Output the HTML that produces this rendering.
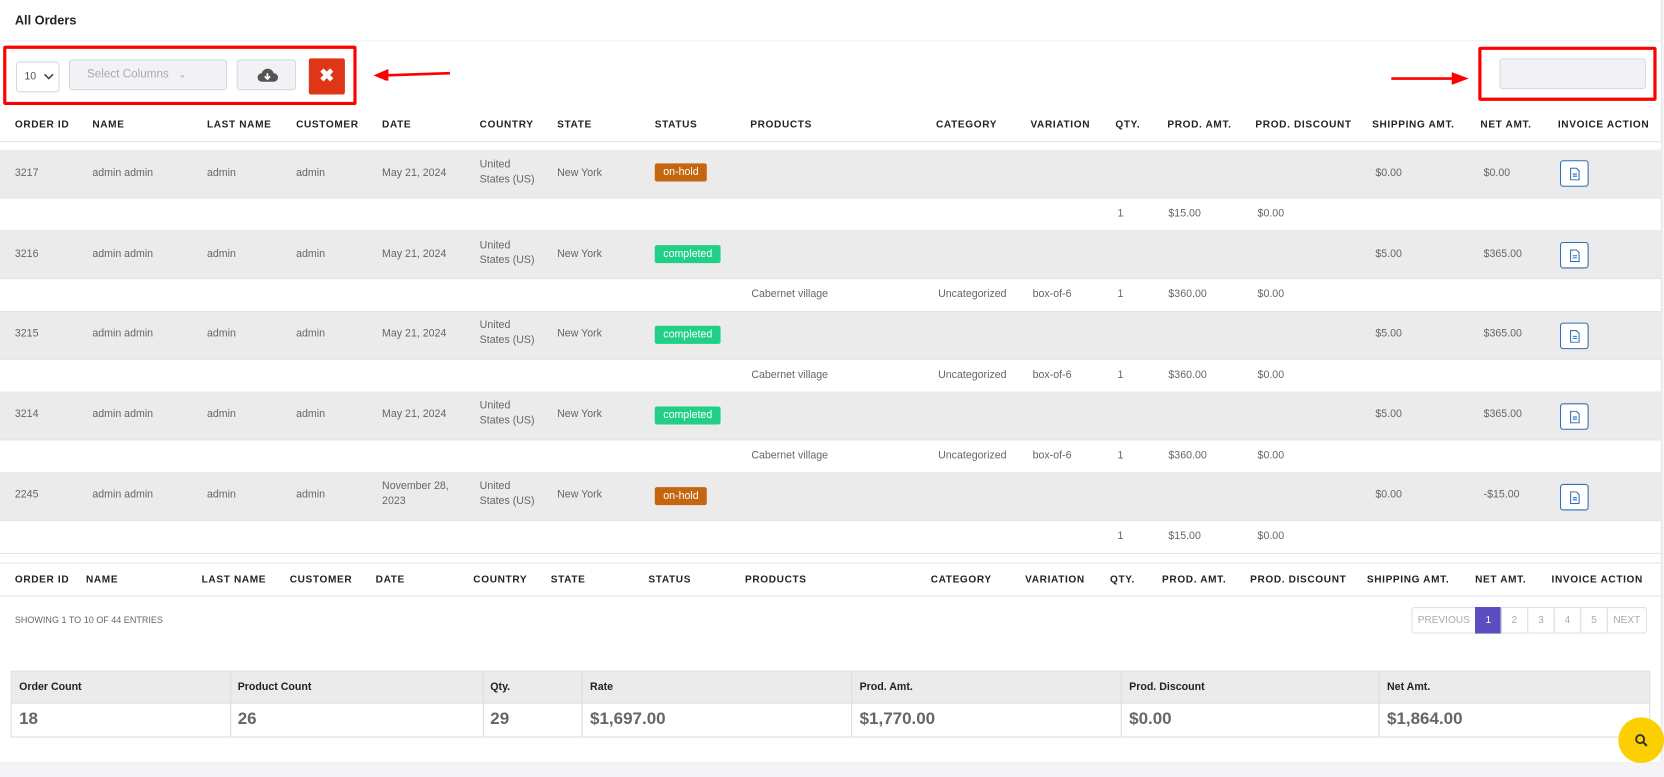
<!DOCTYPE html>
<html><head><meta charset="utf-8"><style>
*{margin:0;padding:0;box-sizing:border-box}
body{width:1664px;height:777px;background:#f3f3f8;font-family:"Liberation Sans",sans-serif;position:relative;overflow:hidden}
#w{position:absolute;left:0;top:0;width:1568px;height:732px;transform:scale(1.06122);transform-origin:0 0}
.card{position:absolute;left:0;top:0;width:1566px;height:718px;background:#fff;border-right:1px solid #e5e5ea}
.a{position:absolute;white-space:nowrap}
.h{font-size:9.5px;font-weight:bold;color:#222;letter-spacing:.6px;line-height:12px}
.c{font-size:10px;color:#666;line-height:12px}
.row{position:absolute;left:0;width:1566px;border-bottom:1px solid #e3e3e8}
.g{background:#ebebeb}
.badge{position:absolute;left:617px;top:13px;height:17px;border-radius:2px;color:#fff;font-size:10px;line-height:17px;padding:0 8px}
.oh{background:#c5650f}.cp{background:#21cf86}
.inv{position:absolute;left:1470px;top:10px;width:27px;height:25px;border:1px solid #2f6fb3;border-radius:3px;background:#fff}
.pg{position:absolute;top:572px;height:25px;border:1px solid #e0e0e6;font-size:9.5px;color:#aaa;line-height:23px;text-align:center}
.sh{font-size:10px;font-weight:bold;color:#222}
.sv{font-size:16px;font-weight:bold;color:#666}
</style></head><body>
<div id="w">
<div class="card">
<div class="a" style="left:14px;top:12px;font-size:12px;font-weight:bold;color:#222">All Orders</div>
<div class="a" style="left:0;top:38px;width:1566px;height:1px;background:#eee"></div>

<div class="a" style="left:3px;top:43px;width:333px;height:56px;border:3px solid #f00;border-radius:2px"></div>
<div class="a" style="left:15px;top:58px;width:41px;height:29px;border:1px solid #d8d8de;border-radius:3px;font-size:10px;color:#555;line-height:27px;padding-left:7px">10
<svg class="a" style="left:25px;top:10px" width="10" height="7" viewBox="0 0 10 7"><path d="M1 1l4 4 4-4" fill="none" stroke="#444" stroke-width="1.5"/></svg></div>
<div class="a" style="left:65px;top:56px;width:149px;height:29px;border:1px solid #d8d8de;border-radius:3px;background:#f2f2f6;font-size:11px;color:#aaa;line-height:27px;padding-left:16px">Select Columns <span style="font-size:9px;margin-left:6px">&#8964;</span></div>
<div class="a" style="left:223px;top:56px;width:56px;height:29px;border:1px solid #d8d8de;border-radius:3px;background:#f2f2f6">
<svg class="a" style="left:18px;top:6px" width="20" height="16" viewBox="0 0 20 16"><path d="M5 14a4 4 0 0 1-.5-8A6 6 0 0 1 16 6a4 4 0 0 1 0 8z" fill="#555"/><path d="M10 6v5M7.5 9l2.5 2.5L12.5 9" stroke="#fff" stroke-width="1.6" fill="none"/></svg></div>
<div class="a" style="left:291px;top:55px;width:34px;height:34px;background:#de3617;border-radius:2px;color:#fff;font-size:17px;font-weight:bold;text-align:center;line-height:34px">&#10006;</div>
<svg class="a" style="left:350px;top:64px" width="76" height="12" viewBox="0 0 76 12"><path d="M74 5L14 7" stroke="#f00" stroke-width="2.5"/><path d="M2 7l14-6v12z" fill="#f00"/></svg>
<svg class="a" style="left:1310px;top:68px" width="76" height="12" viewBox="0 0 76 12"><path d="M1 6h60" stroke="#f00" stroke-width="2.5"/><path d="M74 6L58 0v12z" fill="#f00"/></svg>
<div class="a" style="left:1393px;top:44px;width:168px;height:51px;border:3px solid #f00;border-radius:2px"></div>
<div class="a" style="left:1413px;top:55px;width:138px;height:29px;border:1px solid #d8d8de;border-radius:3px;background:#f2f2f6"></div>

<div class="a" style="left:0;top:133px;width:1566px;height:1px;background:#e3e3e8"></div>
<div class="h">
<div class="a" style="left:14px;top:112px">ORDER ID</div><div class="a" style="left:87px;top:112px">NAME</div><div class="a" style="left:195px;top:112px">LAST NAME</div><div class="a" style="left:279px;top:112px">CUSTOMER</div><div class="a" style="left:360px;top:112px">DATE</div><div class="a" style="left:452px;top:112px">COUNTRY</div><div class="a" style="left:525px;top:112px">STATE</div><div class="a" style="left:617px;top:112px">STATUS</div><div class="a" style="left:707px;top:112px">PRODUCTS</div><div class="a" style="left:882px;top:112px">CATEGORY</div><div class="a" style="left:971px;top:112px">VARIATION</div><div class="a" style="left:1051px;top:112px">QTY.</div><div class="a" style="left:1100px;top:112px">PROD. AMT.</div><div class="a" style="left:1183px;top:112px">PROD. DISCOUNT</div><div class="a" style="left:1293px;top:112px">SHIPPING AMT.</div><div class="a" style="left:1395px;top:112px">NET AMT.</div><div class="a" style="left:1468px;top:112px">INVOICE ACTION</div>
</div>

<div class="row g c" style="top:141px;height:46px"><div class="a" style="left:14px;top:17px">3217</div><div class="a" style="left:87px;top:17px">admin admin</div><div class="a" style="left:195px;top:17px">admin</div><div class="a" style="left:279px;top:17px">admin</div><div class="a" style="left:360px;top:17px">May 21, 2024</div><div class="a" style="left:452px;top:9px">United<br><span style="line-height:16px">States (US)</span></div><div class="a" style="left:525px;top:17px">New York</div><div class="badge oh">on-hold</div><div class="a" style="left:1296px;top:17px">$0.00</div><div class="a" style="left:1398px;top:17px">$0.00</div><div class="inv"><svg class="a" style="left:8px;top:6px" width="10" height="12" viewBox="0 0 10 12"><path d="M1 .5h5.5L9 3v8.5H1z" fill="none" stroke="#2f6fb3"/><path d="M3 6h4M3 8h4" stroke="#2f6fb3"/></svg></div></div>
<div class="row c" style="top:187px;height:31px"><div class="a" style="left:1053px;top:9px">1</div><div class="a" style="left:1101px;top:9px">$15.00</div><div class="a" style="left:1185px;top:9px">$0.00</div></div>

<div class="row g c" style="top:218px;height:45px"><div class="a" style="left:14px;top:16px">3216</div><div class="a" style="left:87px;top:16px">admin admin</div><div class="a" style="left:195px;top:16px">admin</div><div class="a" style="left:279px;top:16px">admin</div><div class="a" style="left:360px;top:16px">May 21, 2024</div><div class="a" style="left:452px;top:8px">United<br><span style="line-height:16px">States (US)</span></div><div class="a" style="left:525px;top:16px">New York</div><div class="badge cp">completed</div><div class="a" style="left:1296px;top:16px">$5.00</div><div class="a" style="left:1398px;top:16px">$365.00</div><div class="inv"><svg class="a" style="left:8px;top:6px" width="10" height="12" viewBox="0 0 10 12"><path d="M1 .5h5.5L9 3v8.5H1z" fill="none" stroke="#2f6fb3"/><path d="M3 6h4M3 8h4" stroke="#2f6fb3"/></svg></div></div>
<div class="row c" style="top:263px;height:31px"><div class="a" style="left:708px;top:9px">Cabernet village</div><div class="a" style="left:884px;top:9px">Uncategorized</div><div class="a" style="left:973px;top:9px">box-of-6</div><div class="a" style="left:1053px;top:9px">1</div><div class="a" style="left:1101px;top:9px">$360.00</div><div class="a" style="left:1185px;top:9px">$0.00</div></div>

<div class="row g c" style="top:294px;height:45px"><div class="a" style="left:14px;top:15px">3215</div><div class="a" style="left:87px;top:15px">admin admin</div><div class="a" style="left:195px;top:15px">admin</div><div class="a" style="left:279px;top:15px">admin</div><div class="a" style="left:360px;top:15px">May 21, 2024</div><div class="a" style="left:452px;top:7px">United<br><span style="line-height:16px">States (US)</span></div><div class="a" style="left:525px;top:15px">New York</div><div class="badge cp">completed</div><div class="a" style="left:1296px;top:15px">$5.00</div><div class="a" style="left:1398px;top:15px">$365.00</div><div class="inv"><svg class="a" style="left:8px;top:6px" width="10" height="12" viewBox="0 0 10 12"><path d="M1 .5h5.5L9 3v8.5H1z" fill="none" stroke="#2f6fb3"/><path d="M3 6h4M3 8h4" stroke="#2f6fb3"/></svg></div></div>
<div class="row c" style="top:339px;height:31px"><div class="a" style="left:708px;top:9px">Cabernet village</div><div class="a" style="left:884px;top:9px">Uncategorized</div><div class="a" style="left:973px;top:9px">box-of-6</div><div class="a" style="left:1053px;top:9px">1</div><div class="a" style="left:1101px;top:9px">$360.00</div><div class="a" style="left:1185px;top:9px">$0.00</div></div>

<div class="row g c" style="top:370px;height:45px"><div class="a" style="left:14px;top:15px">3214</div><div class="a" style="left:87px;top:15px">admin admin</div><div class="a" style="left:195px;top:15px">admin</div><div class="a" style="left:279px;top:15px">admin</div><div class="a" style="left:360px;top:15px">May 21, 2024</div><div class="a" style="left:452px;top:7px">United<br><span style="line-height:16px">States (US)</span></div><div class="a" style="left:525px;top:15px">New York</div><div class="badge cp">completed</div><div class="a" style="left:1296px;top:15px">$5.00</div><div class="a" style="left:1398px;top:15px">$365.00</div><div class="inv"><svg class="a" style="left:8px;top:6px" width="10" height="12" viewBox="0 0 10 12"><path d="M1 .5h5.5L9 3v8.5H1z" fill="none" stroke="#2f6fb3"/><path d="M3 6h4M3 8h4" stroke="#2f6fb3"/></svg></div></div>
<div class="row c" style="top:415px;height:31px"><div class="a" style="left:708px;top:9px">Cabernet village</div><div class="a" style="left:884px;top:9px">Uncategorized</div><div class="a" style="left:973px;top:9px">box-of-6</div><div class="a" style="left:1053px;top:9px">1</div><div class="a" style="left:1101px;top:9px">$360.00</div><div class="a" style="left:1185px;top:9px">$0.00</div></div>

<div class="row g c" style="top:446px;height:45px"><div class="a" style="left:14px;top:15px">2245</div><div class="a" style="left:87px;top:15px">admin admin</div><div class="a" style="left:195px;top:15px">admin</div><div class="a" style="left:279px;top:15px">admin</div><div class="a" style="left:360px;top:7px">November 28,<br><span style="line-height:16px">2023</span></div><div class="a" style="left:452px;top:7px">United<br><span style="line-height:16px">States (US)</span></div><div class="a" style="left:525px;top:15px">New York</div><div class="badge oh">on-hold</div><div class="a" style="left:1296px;top:15px">$0.00</div><div class="a" style="left:1398px;top:15px">-$15.00</div><div class="inv"><svg class="a" style="left:8px;top:6px" width="10" height="12" viewBox="0 0 10 12"><path d="M1 .5h5.5L9 3v8.5H1z" fill="none" stroke="#2f6fb3"/><path d="M3 6h4M3 8h4" stroke="#2f6fb3"/></svg></div></div>
<div class="row c" style="top:491px;height:31px"><div class="a" style="left:1053px;top:9px">1</div><div class="a" style="left:1101px;top:9px">$15.00</div><div class="a" style="left:1185px;top:9px">$0.00</div></div>

<div class="a" style="left:0;top:530px;width:1566px;height:1px;background:#e3e3e8"></div>
<div class="a" style="left:0;top:561px;width:1566px;height:1px;background:#e3e3e8"></div>
<div class="h">
<div class="a" style="left:14px;top:541px">ORDER ID</div><div class="a" style="left:81px;top:541px">NAME</div><div class="a" style="left:190px;top:541px">LAST NAME</div><div class="a" style="left:273px;top:541px">CUSTOMER</div><div class="a" style="left:354px;top:541px">DATE</div><div class="a" style="left:446px;top:541px">COUNTRY</div><div class="a" style="left:519px;top:541px">STATE</div><div class="a" style="left:611px;top:541px">STATUS</div><div class="a" style="left:702px;top:541px">PRODUCTS</div><div class="a" style="left:877px;top:541px">CATEGORY</div><div class="a" style="left:966px;top:541px">VARIATION</div><div class="a" style="left:1046px;top:541px">QTY.</div><div class="a" style="left:1095px;top:541px">PROD. AMT.</div><div class="a" style="left:1178px;top:541px">PROD. DISCOUNT</div><div class="a" style="left:1288px;top:541px">SHIPPING AMT.</div><div class="a" style="left:1390px;top:541px">NET AMT.</div><div class="a" style="left:1462px;top:541px">INVOICE ACTION</div>
</div>

<div class="a" style="left:14px;top:579px;font-size:8.5px;color:#666">SHOWING 1 TO 10 OF 44 ENTRIES</div>
<div class="pg" style="left:1330px;width:61px;border-radius:3px 0 0 3px">PREVIOUS</div>
<div class="pg" style="left:1390px;width:25px;background:#5b4fc0;border-color:#5b4fc0;color:#fff">1</div>
<div class="pg" style="left:1414px;width:26px">2</div>
<div class="pg" style="left:1439px;width:26px">3</div>
<div class="pg" style="left:1464px;width:26px">4</div>
<div class="pg" style="left:1489px;width:26px">5</div>
<div class="pg" style="left:1514px;width:38px;border-radius:0 3px 3px 0">NEXT</div>

<div class="a" style="left:10px;top:632px;width:1545px;height:63px;border:1px solid #ddd"></div>
<div class="a" style="left:11px;top:633px;width:1543px;height:30px;background:#ebebeb;border-bottom:1px solid #ddd"></div>
<div class="a" style="left:217px;top:632px;width:1px;height:63px;background:#ddd"></div>
<div class="a" style="left:455px;top:632px;width:1px;height:63px;background:#ddd"></div>
<div class="a" style="left:548px;top:632px;width:1px;height:63px;background:#ddd"></div>
<div class="a" style="left:802px;top:632px;width:1px;height:63px;background:#ddd"></div>
<div class="a" style="left:1056px;top:632px;width:1px;height:63px;background:#ddd"></div>
<div class="a" style="left:1299px;top:632px;width:1px;height:63px;background:#ddd"></div>
<div class="sh">
<div class="a" style="left:18px;top:642px">Order Count</div><div class="a" style="left:224px;top:642px">Product Count</div><div class="a" style="left:462px;top:642px">Qty.</div><div class="a" style="left:556px;top:642px">Rate</div><div class="a" style="left:810px;top:642px">Prod. Amt.</div><div class="a" style="left:1064px;top:642px">Prod. Discount</div><div class="a" style="left:1307px;top:642px">Net Amt.</div>
</div>
<div class="sv">
<div class="a" style="left:18px;top:669px">18</div><div class="a" style="left:224px;top:669px">26</div><div class="a" style="left:462px;top:669px">29</div><div class="a" style="left:556px;top:669px">$1,697.00</div><div class="a" style="left:810px;top:669px">$1,770.00</div><div class="a" style="left:1064px;top:669px">$0.00</div><div class="a" style="left:1307px;top:669px">$1,864.00</div>
</div>
</div>
<div class="a" style="left:1525px;top:676px;width:43px;height:43px;border-radius:50%;background:#fccf00">
<svg class="a" style="left:15px;top:15px" width="13" height="13" viewBox="0 0 13 13"><circle cx="5.5" cy="5.5" r="3.8" fill="none" stroke="#333" stroke-width="1.8"/><path d="M8.3 8.3l3.5 3.5" stroke="#333" stroke-width="2"/></svg></div>
</div>
</body></html>
